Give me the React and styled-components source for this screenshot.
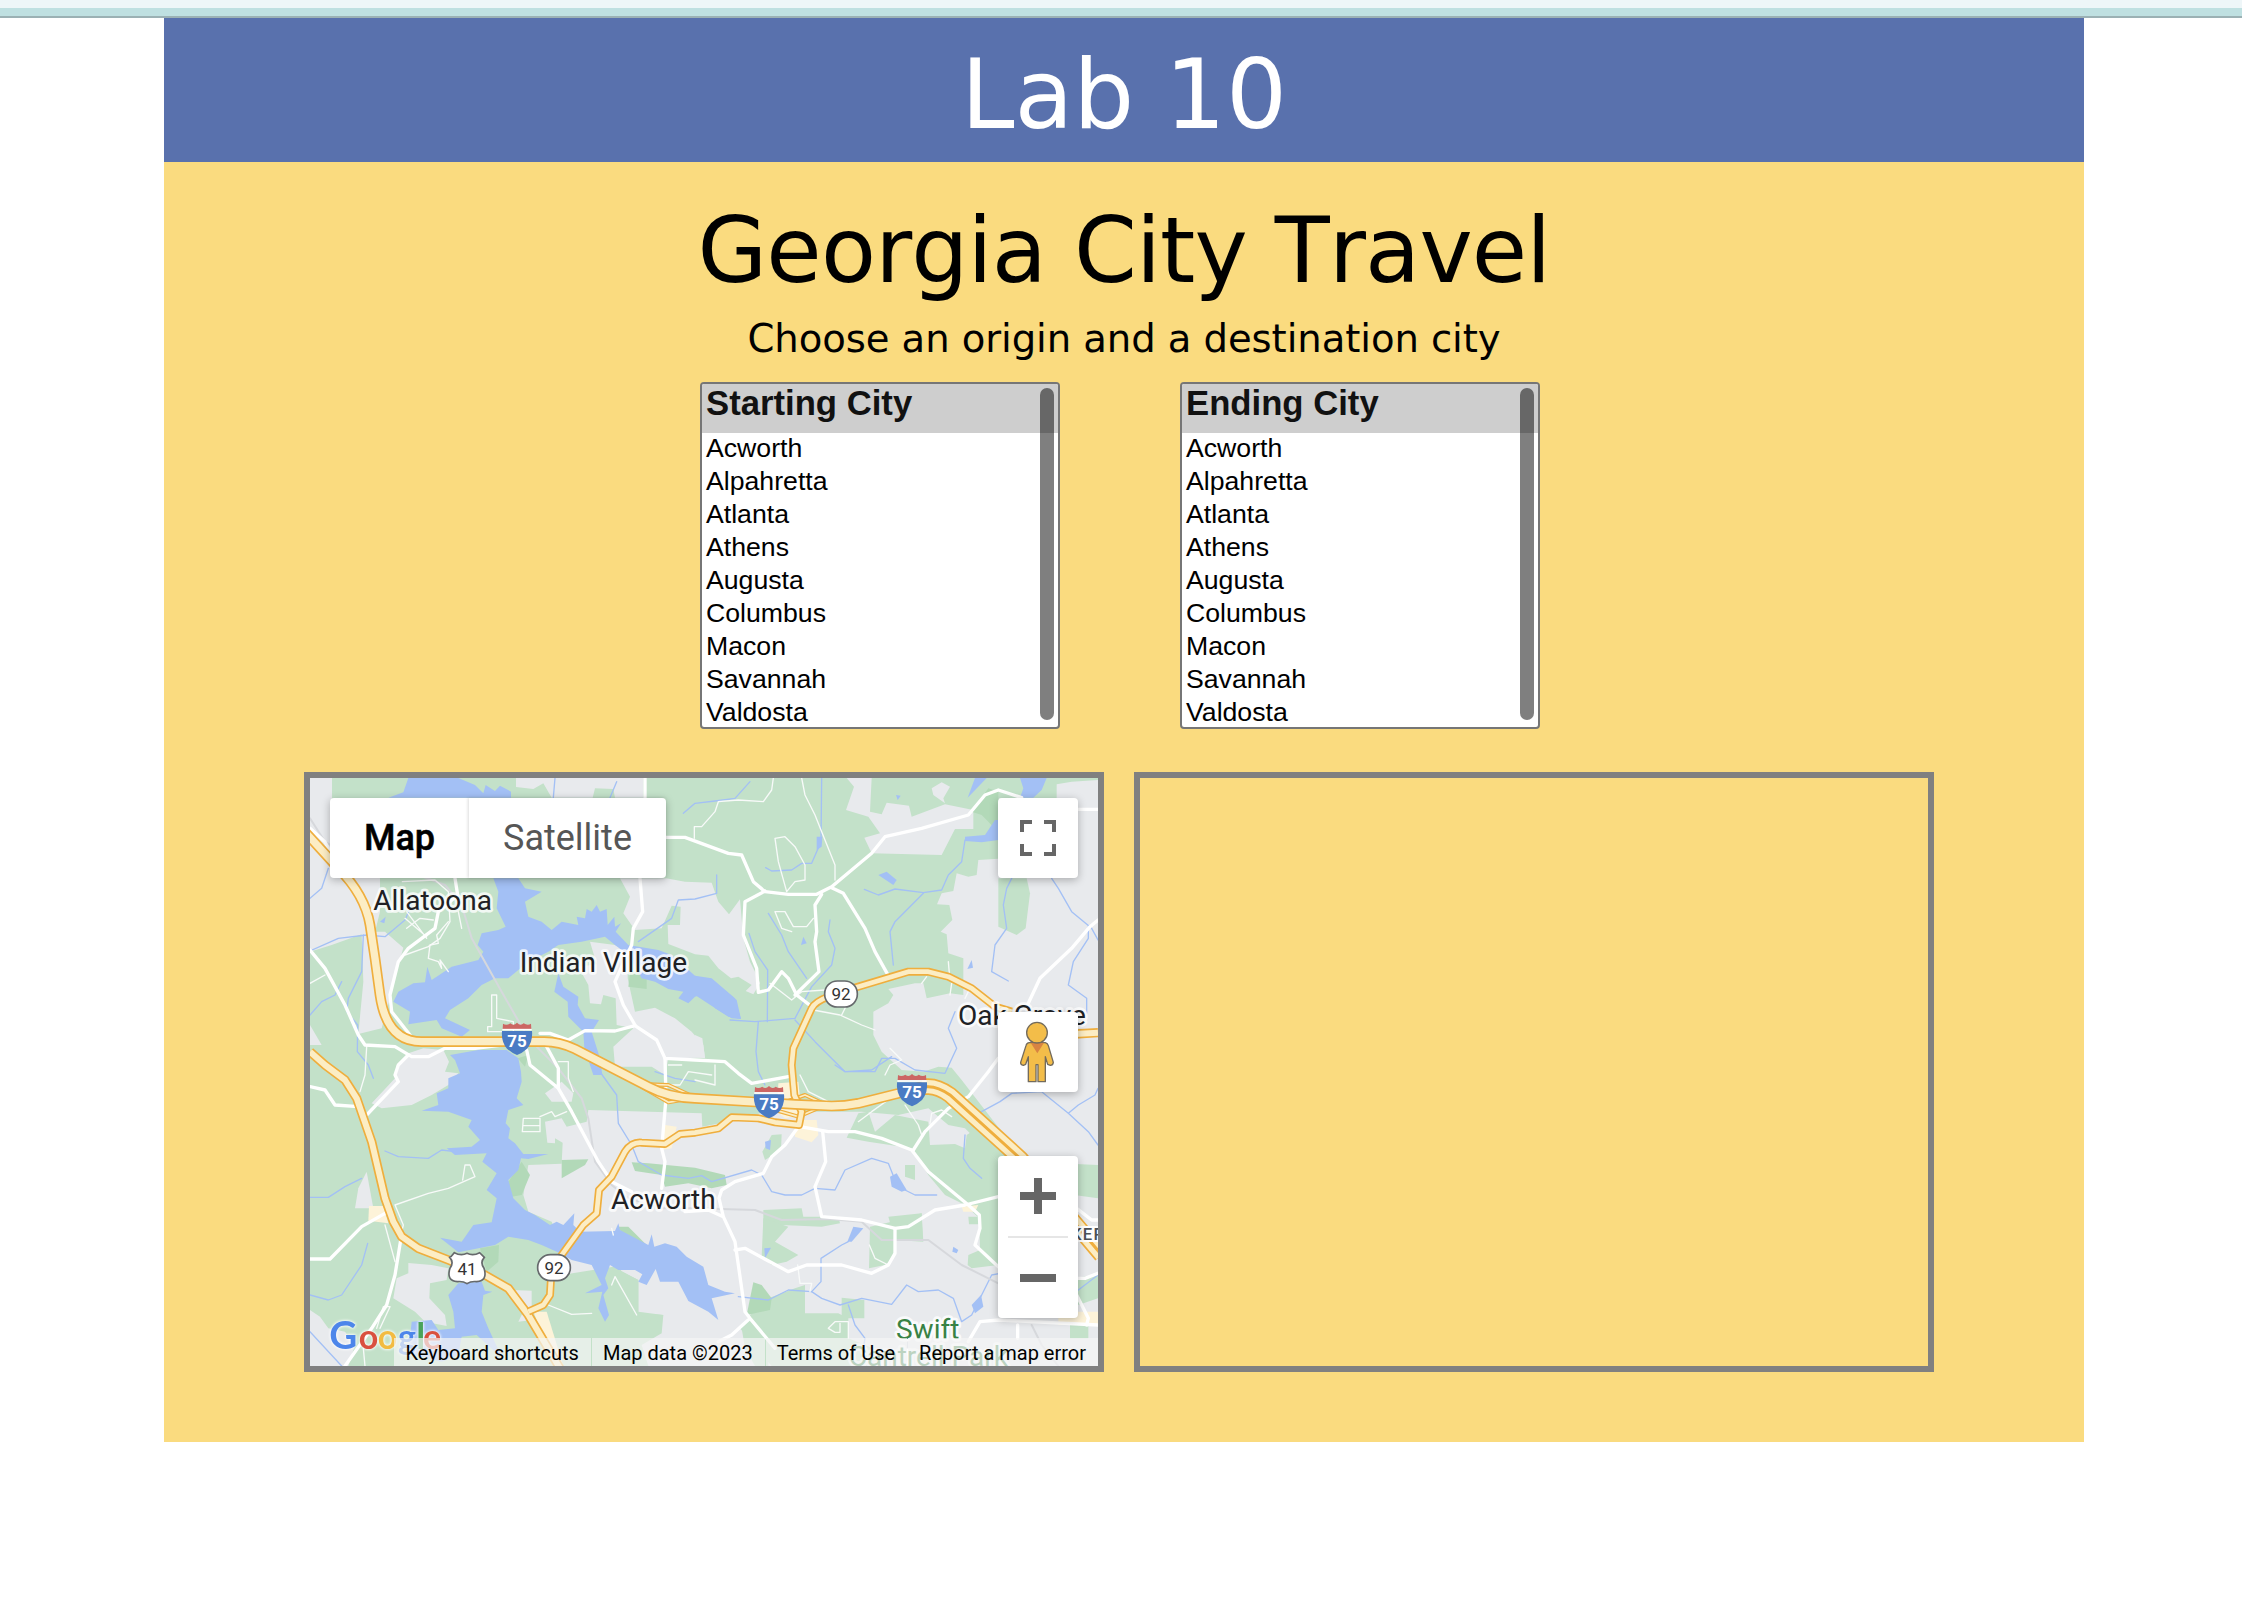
import React from "react";
import styled, { createGlobalStyle } from "styled-components";

const GlobalStyle = createGlobalStyle`
  * { box-sizing: border-box; }
  body { margin: 0; background: #fff; font-family: Verdana, "DejaVu Sans", sans-serif; }
`;

const TopStrip = styled.div`
  height: 18px;
  background: #bfe0e1;
  border-top: 8px solid #eef6f8;
  border-bottom: 2px solid #9bb1b4;
`;
const Page = styled.div`
  width: 1920px;
  margin-left: 164px;
`;
const Header = styled.header`
  height: 144px;
  padding-top: 21px;
  background: #5971ad;
  color: #fff;
  text-align: center;
  font-size: 96px;
  line-height: 112px;
  font-kerning: none;
`;
const Main = styled.main`
  height: 1280px;
  padding-top: 35px;
  background: #fadb7f;
  color: #000;
`;
const Title = styled.h1`
  margin: 0;
  text-align: center;
  font-weight: 400;
  font-size: 90px;
  line-height: 108px;
  letter-spacing: -0.83px;
  font-kerning: none;
`;
const Subtitle = styled.p`
  margin: 0;
  text-align: center;
  font-size: 38.6px;
  line-height: 48px;
  letter-spacing: -0.08px;
  padding-top: 10px;
  font-kerning: none;
`;
const Pickers = styled.div`
  display: flex;
  gap: 120px;
  padding: 19px 0 0 536px;
`;
const ListBox = styled.div`
  position: relative;
  width: 360px;
  height: 347px;
  border: 2px solid #767676;
  border-radius: 4px;
  background: #fff;
  overflow: hidden;
  font-family: Arial, "Liberation Sans", sans-serif;
`;
const ListHead = styled.div`
  height: 49px;
  padding-left: 4px;
  background: #cecece;
  color: #111;
  font-weight: 700;
  font-size: 34.7px;
  line-height: 38px;
`;
const Options = styled.ul`
  display: flex;
  flex-direction: column;
  gap: 3px;
  margin: 0;
  padding: 0 0 0 4px;
  list-style: none;
`;
const Option = styled.li`
  font-size: 26.67px;
  line-height: 30px;
`;
const Thumb = styled.div`
  position: absolute;
  top: 4px;
  right: 4px;
  width: 14px;
  height: 332px;
  border-radius: 7px;
  background: rgba(0, 0, 0, 0.5);
`;
const Panels = styled.div`
  display: flex;
  gap: 30px;
  padding: 43px 0 0 140px;
`;
const Panel = styled.section`
  position: relative;
  width: 800px;
  height: 600px;
  border: 6px solid #808080;
  overflow: hidden;
  font-family: Roboto, Arial, sans-serif;
`;
const MapArt = styled.svg`
  display: block;
  width: 788px;
  height: 588px;
`;
const TypeSwitch = styled.div`
  position: absolute;
  top: 20px;
  left: 20px;
  display: flex;
  height: 80px;
  border-radius: 4px;
  background: #fff;
  box-shadow: 0 2px 8px rgba(0, 0, 0, 0.28);
`;
const TypeButton = styled.div`
  width: ${(p) => p.$width}px;
  text-align: center;
  font-size: 36px;
  line-height: 80px;
  font-weight: ${(p) => (p.$active ? 500 : 400)};
  color: ${(p) => (p.$active ? "#000" : "#565656")};
  -webkit-text-stroke: ${(p) => (p.$active ? "0.5px #000" : "0")};
  box-shadow: ${(p) => (p.$active ? "none" : "-1px 0 3px rgba(0,0,0,.14)")};
`;
const Control = styled.div`
  position: absolute;
  right: 20px;
  top: ${(p) => p.$top}px;
  width: 80px;
  height: ${(p) => p.$height || 80}px;
  border-radius: 4px;
  background: #fff;
  box-shadow: 0 2px 8px rgba(0, 0, 0, 0.28);
`;
const ControlIcon = styled.svg`
  display: block;
  width: 80px;
  height: 80px;
`;
const Divider = styled.div`
  width: 60px;
  height: 2px;
  margin: 0 10px;
  background: #e6e6e6;
`;
const Attribution = styled.footer`
  position: absolute;
  right: 0;
  bottom: 0;
  display: flex;
  height: 28px;
  font-size: 20px;
  line-height: 30px;
  color: #000;
  white-space: nowrap;
`;
const Credit = styled.span`
  padding: 0 12px 0 11px;
  margin-left: 1px;
  background: rgba(245, 245, 245, 0.7);
`;

const CITIES = ["Acworth", "Alpahretta", "Atlanta", "Athens", "Augusta", "Columbus", "Macon", "Savannah", "Valdosta"];

const LAND = [
  "M45 39H111V100L180 280L255 340V440L240 500L270 500L325 548L300 640L285 700L260 790L190 807L205 650L200 508L110 540L45 560Z",
  "M663 39H1045V98H960L955 72L900 70L893 98H770L745 55L715 72L663 66Z",
  "M975 340H1113L1170 350L1250 353L1270 410L1302 448L1335 403L1345 520L1365 590L1385 630L1395 655L1375 688L1352 678L1370 660L1330 635L1308 640L1270 610L1240 572L1200 568L1120 537L1118 480L1155 480L1157 425L1130 422L1100 490L1020 495L985 445L1005 395Z",
  "M885 530L960 540L1000 560L998 640L1020 740L1080 728L1140 760L1190 800L1225 840L1230 878L1120 880L1110 930L1070 905L960 905L955 845L1015 790L965 780L962 700L925 690L918 718L885 715L880 660L850 605L905 598Z",
  "M340 865L385 850L445 855L462 890L450 920L490 925L460 960L410 990L350 1020L260 1030L230 1015L300 940L305 900Z",
  "M215 1220L235 1330L180 1330L190 1270Z",
  "M340 1494L410 1500L460 1510L455 1545L405 1555L403 1600L450 1650L455 1683L390 1670L360 1640L295 1600L305 1540L340 1525Z",
  "M45 1635L75 1655L100 1690L150 1700L180 1740L160 1803H45Z",
  "M45 780L80 840L45 840Z",
  "M750 985L800 950L835 985L830 1010L770 1010Z",
  "M750 1070L800 1060L815 1085L875 1070L880 1035L1220 1045L1222 1085L1350 1060L1410 1040H1560L1700 1040L1810 1050L1900 1030L1960 1080L2010 1090L2090 1170L2190 1270L2409 1300V1803H1060L1040 1740L1100 1705L1105 1650L1030 1645L1030 1545L955 1505L800 1530L800 1450L770 1370L700 1340L685 1290L700 1200L800 1196L803 1133L780 1120L780 1135L757 1133Z",
  "M670 1670L710 1665V1577L650 1575L690 1630Z",
  "M1655 39H1730L1725 140L1760 148L1775 113L1842 122L1850 155L1950 118L2035 135V192H1980L1940 270L1730 265L1708 218L1755 205L1720 155L1653 135L1677 65Z",
  "M1910 70L1940 52L1965 65L1945 100L1950 115L1915 90Z",
  "M2285 58L2330 50L2409 45V300H2300L2110 100H2285Z",
  "M2050 285L2110 281L2409 280V1200L2190 1190L2000 945L1970 908L1930 905L1885 920L1820 915L1760 860L1735 810V740L1780 715L1795 690L1780 672L1860 655L1885 655L1895 700L1965 685L2005 690L2005 580L1960 565L1955 508L1937 500L1972 465L1963 420L1926 418L1940 385L1975 378L1985 325L2020 335L2045 330Z",
  "M1200 810L1222 820L1230 880L1200 875Z",
];

const GREEN = [
  "M2110 340H2195L2205 385L2192 490L2165 510L2110 485Z",
  "M1430 1110L1460 1108L1458 1155L1410 1185L1402 1160Z",
  "M1690 1045L1720 1040L1740 1100L1800 1050L1900 1070L1905 1140L1980 1137L2010 1150L2015 1110L2030 1100L2110 1190V1500L2030 1510L2018 1500L2020 1470L2055 1455L2053 1360L2010 1320L1950 1290L1900 1230L1850 1150L1720 1130L1655 1118Z",
  "M1830 1200H1860V1245L1830 1235Z",
  "M1405 1335L1520 1330L1525 1355L1630 1355L1635 1375L1580 1385L1460 1380L1405 1480Z",
  "M1405 1360L1480 1385L1440 1430L1510 1470L1475 1490L1430 1500L1400 1475Z",
  "M1725 1385L1790 1370L1880 1345L1885 1430L1800 1425L1795 1480L1770 1500L1722 1510Z",
  "M1780 1355L1880 1345L1883 1425L1800 1425Z",
  "M1365 1650L1420 1600L1500 1570L1530 1560V1645H1630L1640 1650V1598L1708 1605V1660H1660V1720L1760 1760L1730 1803H1430L1335 1690Z",
  "M2020 1355H2055V1378H2022Z",
  "M2409 1530V1600L2350 1620L2330 1540Z",
  "M2325 1680H2380V1720H2325Z",
  "M950 1505L975 1510L980 1520L1030 1545V1640L1105 1650L1060 1700L1040 1680L1070 1665L1020 1645L950 1635Z",
  "M795 1610L890 1605L895 1640L830 1705L795 1690Z",
  "M830 1700H930V1803H820Z",
  "M1340 1690L1375 1660L1420 1700V1803H1380L1350 1750Z",
];
const DARK_GREEN = [
  "M640 1250L680 1190L705 1230L680 1290L650 1295Z",
  "M800 1185L880 1183L870 1200L800 1240Z",
  "M1010 1192L1060 1195L1200 1208L1290 1230L1295 1260L1250 1270L1180 1255L1110 1265L1100 1230L1020 1218Z",
  "M965 1385L1000 1385L1055 1440L1020 1445Z",
  "M1375 1552L1400 1560L1430 1600L1425 1635L1355 1650Z",
  "M555 1450L612 1440L610 1490L575 1520Z",
  "M1005 625H1055V672L1000 665Z",
  "M2030 140L2080 70L2110 80V200L2060 150Z",
  "M668 880L700 870L690 905Z",
];
const CREAM = [
  "M222 1323H265L280 1375L220 1367Z",
  "M1110 1080L1145 1085L1130 1150L1100 1155Z",
  "M1450 955L1510 950L1520 1050L1470 1060L1445 1040Z",
  "M1500 1065L1565 1065L1570 1110L1550 1132L1500 1115Z",
  "M2000 1325L2050 1320L2040 1340L2005 1340Z",
  "M715 1640H755L805 1803H780Z",
  "M2290 1640H2409V1680H2290Z",
];
const WATER = [
  "M340 39H490L540 60L565 85L572 60L600 78L615 62L648 80V98H280L325 82Z",
  "M595 340H670L690 370L740 380L690 410L700 455L740 470L770 495L800 470L850 480L845 455L870 460L875 432L890 440L905 420L915 440L935 432L938 480L958 455L960 485L978 475L962 500L1000 540L1090 555L1130 570L1200 632L1250 640L1320 700L1338 762L1310 760L1260 730L1235 685L1200 695L1180 715L1150 700L1165 680L1120 672L1080 650L1040 640L1000 570L960 540L930 515L860 530L790 540L760 560L700 590L640 640L600 640L560 660L520 700L465 735L450 760L525 795L500 815L440 790L425 765L340 778L345 740L295 710L310 680L355 655L390 652L397 605L410 645L470 605L550 585L565 560L548 540L560 505L610 495L632 485L605 430L610 380Z",
  "M790 625L805 665L850 695L848 720L870 760L912 765L890 800L915 880L922 930H895L868 850L865 800L820 755L818 710L778 680Z",
  "M465 870L550 855L635 855L670 880L678 920L680 950L665 1000L685 1020L640 1035L632 1075L645 1090L640 1120L660 1135L685 1167L760 1167L700 1182L678 1180L670 1215L640 1245L655 1300L690 1335L720 1350L765 1380L785 1370L805 1380L838 1345L835 1380L855 1400L960 1398L970 1375L975 1395L1060 1440L1070 1408L1078 1445L1110 1435L1145 1445L1175 1475L1225 1505L1240 1560L1290 1580L1320 1585L1250 1600L1270 1665L1240 1640L1180 1608L1150 1550L1095 1550L1082 1512L1055 1560L1030 1550L1042 1528L1020 1515L970 1515L945 1500L930 1540L940 1570L925 1590L942 1650L930 1670L910 1630L922 1580L870 1585L920 1560L890 1500L830 1485L795 1465L740 1440L700 1425L640 1415L600 1440L490 1462L435 1418L500 1430L535 1380L590 1372L605 1300L575 1275L605 1225L562 1190L575 1165L480 1170L455 1150L530 1145L555 1125L520 1085L530 1065L460 1040L380 1037L430 1020L425 985L460 970L460 940L495 925L480 885Z",
  "M490 1555L560 1550L570 1577L592 1580L565 1590L560 1640L580 1690L622 1780L545 1710L500 1715L490 1770L440 1790L340 1765L350 1670L410 1665L430 1695L480 1690L475 1640L460 1590Z",
  "M2175 39H2255L2240 75L2215 98H2175L2185 70Z",
  "M2018 98L2040 39H2075Z",
  "M1200 632L1255 650L1325 705L1338 762L1300 755L1200 690Z",
  "M1750 330L1775 320L1805 345L1795 360Z",
  "M1565 215H1582L1580 245L1565 255Z",
  "M2010 215L2070 210L2100 165H2110V225L2060 232L2010 228Z",
  "M1525 515L1535 535L1518 540Z",
  "M2030 585L2034 608L2017 612Z",
  "M1785 1235L1805 1225L1835 1275L1820 1280L1790 1265Z",
  "M1410 1130L1428 1125L1425 1155L1412 1150Z",
  "M1975 1445L1990 1455L1985 1465L1972 1460Z",
  "M2058 1590L2065 1625L2040 1645L2030 1620Z",
  "M1408 1450L1428 1448L1410 1480Z",
  "M1675 1385L1705 1390L1670 1430L1657 1430Z",
  "M1803 90L1817 92L1808 105Z",
  "M272 455L268 475L255 470Z",
];
const STREAMS = [
  "M45 558L130 520L215 510L270 515L330 465L350 420",
  "M45 400L80 370L100 310",
  "M205 510L200 620L160 700L155 740L188 780L187 860L220 900L235 940",
  "M45 750L80 710L120 690L140 650",
  "M945 98L965 50M780 39L775 98",
  "M1165 145L1200 115L1260 108L1320 100L1365 50",
  "M1580 39L1578 230L1550 295H1520L1490 315L1430 318L1412 308",
  "M2010 225L2000 290L1960 330L1940 375L1885 383L1800 372L1750 390L1708 373",
  "M1885 385L1800 470L1785 500L1795 600",
  "M1420 445L1460 510L1480 560L1535 640",
  "M1362 505L1380 560L1418 615L1417 770",
  "M1605 465L1600 500L1620 550L1610 600L1550 665L1500 760L1380 770L1305 765",
  "M1390 770L1383 860L1390 920L1410 960",
  "M1500 765L1560 830L1650 920H1740L1760 880L1800 880L1860 915L1950 925L1985 850L1960 790L1980 740",
  "M2150 340L2135 370L2125 420L2135 490L2100 540L2090 620L2140 648",
  "M2270 340L2290 370L2330 440L2390 490L2409 525M2380 485V520L2335 590L2320 660L2375 700V745",
  "M1030 530L1130 460L1150 405L1200 402L1265 385V330",
  "M900 900L965 990L970 1075L1010 1140L1030 1190L1100 1230L1180 1240L1220 1232L1250 1250L1370 1215L1400 1230L1430 1280L1470 1290H1520L1560 1270L1620 1275L1650 1215L1730 1180L1780 1195L1800 1245",
  "M1830 1275L1860 1290L1925 1290",
  "M270 1158L310 1175L400 1180L440 1155L480 1160",
  "M45 1297H100L150 1265L200 1240",
  "M45 1590L100 1605L140 1590L200 1500L218 1435",
  "M45 1700L140 1803",
  "M1330 1595L1420 1605L1480 1575L1550 1580L1580 1600L1635 1620L1700 1600L1790 1618L1835 1560L1870 1580L1930 1575L1975 1600L2000 1670L2030 1650L2090 1530L2115 1525",
  "M1550 1580L1578 1550V1480L1640 1440L1660 1430",
  "M1660 1620L1680 1680L1710 1720L1705 1750L1740 1803",
  "M2010 1110L2005 1180L2025 1210L2060 1240",
  "M2050 1045L2115 1010L2150 985L2240 980L2320 1045L2380 1100L2409 1140M2320 1045L2350 1020L2400 990L2409 970",
  "M2350 1575L2409 1530",
  "M1200 950L1140 940L1080 920",
  "M1620 900L1650 920L1730 915L1790 875",
];
const RAIL = [
  "M45 160L90 230L250 330L370 330L450 360L500 420L530 520L620 680L700 820L790 910L860 1000L880 1060L900 1190L950 1260L1000 1300L1100 1330L1200 1330L1380 1335L1460 1365L1600 1362L1700 1370L1760 1425L1900 1425L2000 1500L2110 1555",
  "M2210 1680L2240 1740L2290 1803",
];
const THIN_ROADS = [
  "M322 350L420 345L460 380L465 470L435 520L400 545L330 570M335 440L395 520M335 490L375 460L415 465M330 460L395 515",
  "M460 470L425 510L430 535L405 540L400 580L430 590L440 610L435 585L460 620M490 440L500 490",
  "M590 690H605V760L655 770V800H578V785H590Z",
  "M45 655L90 630M215 845L210 930L195 980",
  "M300 1320L400 1285L460 1270L540 1235L525 1200H510L503 1245M300 1320L325 1380L315 1420M270 1380L300 1490",
  "M255 1690L285 1625H265L245 1690",
  "M685 1060H735V1100H682ZM735 1055L770 1040L780 1055L815 1040M685 1082H735",
  "M1520 39L1530 90L1560 150L1580 200L1620 300V345M1435 39L1430 75L1405 110L1330 105L1270 110L1260 140L1220 185H1198V220",
  "M1440 220L1450 290L1475 380L1500 350L1530 345L1530 300L1500 245L1470 215Z",
  "M1440 440H1470L1495 485H1535L1555 460M1440 440L1460 490L1490 500",
  "M1425 655L1490 705L1520 680L1590 675M1555 735L1635 750L1700 780L1740 795M1640 750L1655 720",
  "M1785 850L1820 885L1785 900L1770 930",
  "M960 1535L1025 1650M960 1535L950 1560M760 1620L830 1648L890 1645",
  "M1723 1440L1740 1480L1780 1500M1508 1500L1515 1555H1550L1545 1580",
  "M1600 1690L1620 1670H1660V1720M1600 1690L1620 1702H1635V1675",
  "M1690 1070L1730 1040L1800 990M1830 1020L1870 1080L1880 1110M1905 1075L1910 1045L1940 1035L1970 1055",
  "M1120 900H1160M1115 960H1155L1180 920L1250 930M1200 945L1260 960V900M1515 930L1540 980L1600 1010M790 890H820L820 940L835 980",
  "M1960 590L1963 625M1970 655L1965 690M2020 680L2010 700M1895 635L1880 655",
  "M950 1390L955 1410M205 1750L210 1803",
];
const ROADS = [
  "M45 555L90 610L150 720L190 810L210 840L300 845L350 875L400 875L450 850L540 850L620 840",
  "M300 930L310 900L340 870M300 930L310 950L215 1050",
  "M45 965L90 975L120 1020L190 1025",
  "M480 340L488 390L430 440L420 490L340 550L310 590L285 690L290 740L345 810",
  "M45 190L90 230L110 270",
  "M1050 39V98M1035 340L1043 440L1015 490L1010 540L960 650L985 720L1020 780",
  "M1113 217H1170L1300 265L1340 270L1375 350L1410 380L1480 388L1565 388L1610 365L1730 265L1770 215L1880 190L2020 150L2070 90L2110 75L2180 98",
  "M1410 378L1350 410L1345 510L1385 610L1390 682L1420 675L1460 620L1480 640L1505 690L1550 725",
  "M1580 388L1560 420L1565 500L1560 530L1572 620L1500 690",
  "M1610 368L1645 385L1710 490L1740 560L1778 628",
  "M2345 133H2409M2409 465L2385 485L2330 550L2235 640L2195 725",
  "M2110 880L2080 920L2020 995L1960 1030L1890 1100L1855 1155",
  "M735 805L765 805L820 825L870 797L960 798L1020 782L1085 825L1110 880L1200 885L1290 890L1330 925L1370 955L1480 935",
  "M695 855L705 900L790 970L830 1040L910 1190L950 1250L1010 1280M755 845L790 910V970",
  "M1110 880L1113 1000L1100 1150L1110 1190L1100 1270",
  "M1515 1085L1600 1100H1680L1760 1120L1850 1155L1900 1220L2020 1320L2053 1350L2055 1390L2040 1440L2110 1505",
  "M1510 1085L1470 1140L1430 1175L1405 1225L1320 1250L1280 1275L1272 1300L1285 1355L1240 1335L1170 1340M1285 1355L1320 1430L1350 1640L1365 1660L1440 1750M1365 1660L1310 1710L1270 1730",
  "M1583 1100L1592 1190L1560 1265L1580 1355L1700 1365L1800 1390L1840 1385L1920 1335L2010 1320L2110 1295",
  "M1320 1455L1350 1450L1480 1520L1535 1500H1640L1730 1525L1780 1500L1800 1465V1390",
  "M2020 1730L2055 1670L2110 1665L2409 1680M2168 1680V1720",
  "M2345 1330L2390 1365H2409M2345 1590L2380 1660L2375 1680M2345 1540L2370 1540L2409 1525",
  "M45 1482H105L200 1385L270 1345M318 1420L300 1530L275 1620L230 1690L150 1803",
];
const US41 = "M45 860L90 900L150 945L185 1000L230 1130L270 1300L295 1370L320 1415L370 1450L460 1485L570 1530L640 1570L700 1650L795 1810";
const SR92 = "M700 1640L745 1620L765 1590L768 1540L800 1470L865 1380L905 1345L912 1275L950 1235L990 1160Q1010 1130 1040 1133L1110 1137L1155 1107L1200 1103L1270 1090L1310 1057L1390 1060L1440 1072L1512 1080L1520 1040L1498 990L1490 900L1495 850L1550 730Q1560 710 1600 695L1680 668L1840 620H1900L1960 635L2030 670L2100 725L2150 740";
const I75 = "M20 190L130 310Q210 390 225 480L240 580L255 690Q275 830 380 830L620 830H740Q790 828 840 852L1060 965Q1120 997 1200 1000L1500 1018L1610 1023Q1650 1023 1690 1015L1810 985L1880 965";
const I75_SOUTH = "M1880 965H1900Q1930 965 1965 990L2175 1180L2420 1470";
const RAMPS = "M1040 965L1120 1012L1190 1000M1060 958L1120 960L1180 988M1400 995L1440 1035L1510 1055L1580 1025M1480 1008L1530 990L1590 1018";

function Shape({ list, fill }) {
  return list.map((d) => <path key={d} d={d} fill={fill} />);
}
function Line({ list, color, width }) {
  return list.map((d) => (
    <path key={d} d={d} fill="none" stroke={color} strokeWidth={width} strokeLinejoin="round" strokeLinecap="round" />
  ));
}
function Highway({ d, width }) {
  return (
    <g fill="none" strokeLinejoin="round">
      <path d={d} stroke="#efae3d" strokeWidth={width} />
      <path d={d} stroke="#fcedc4" strokeWidth={width - 10} />
    </g>
  );
}
function Interstate({ x, y }) {
  return (
    <g transform={`translate(${x} ${y})`}>
      <path d="M-45-24H45Q48 8 30 29Q16 42 0 48Q-16 42-30 29Q-48 8-45-24Z" fill="#4a7bc4" />
      <path d="M-43-30L-42-46Q-32-39-20-47Q-10-38 0-49Q10-38 20-47Q32-39 42-46L43-30Z" fill="#cc6663" />
      <path d="M-44-28H44" stroke="#fff" strokeWidth="5" />
      <text y="23" textAnchor="middle" fontSize="51" fontWeight="700" fill="#fff">75</text>
    </g>
  );
}
function StateRoute({ x, y }) {
  return (
    <g transform={`translate(${x} ${y})`}>
      <rect x="-49" y="-39" width="98" height="78" rx="38" fill="#fff" stroke="#66696c" strokeWidth="5" />
      <text y="19" textAnchor="middle" fontSize="51" fill="#333">92</text>
    </g>
  );
}
const PlaceLabel = styled.text`
  font-size: 84px;
  fill: ${(p) => p.$color || "#202124"};
  stroke: rgba(255, 255, 255, 0.8);
  stroke-width: 16px;
  stroke-linejoin: round;
  paint-order: stroke;
`;
const LogoText = styled.text`
  font-family: Lato, sans-serif;
  font-weight: 700;
  filter: drop-shadow(0 0 4px rgba(255, 255, 255, 0.9)) drop-shadow(0 0 3px rgba(255, 255, 255, 0.7));
`;

function RoadMap() {
  return (
    <MapArt viewBox="45 39 2364 1764" fontFamily="Roboto, sans-serif">
      <rect x="45" y="39" width="2364" height="1764" fill="#c3e1c9" />
      <Shape list={LAND} fill="#e8eaed" />
      <Shape list={GREEN} fill="#c3e1c9" />
      <Shape list={DARK_GREEN} fill="#b2d9b8" />
      <Shape list={CREAM} fill="#fdf3d9" />
      <Line list={STREAMS} color="#a3c0f5" width={4} />
      <Shape list={WATER} fill="#a3c0f5" />
      <Line list={RAIL} color="#d6d8dc" width={6} />
      <Line list={THIN_ROADS} color="#f8faf9" width={4} />
      <Line list={ROADS} color="#fff" width={10} />
      <Line list={[RAMPS]} color="#efae3d" width={12} />
      <Line list={[RAMPS]} color="#fcedc4" width={5} />
      <Highway d={US41} width={28} />
      <Highway d={SR92} width={24} />
      <Highway d="M2340 807L2409 803" width={28} />
      <Highway d={I75} width={32} />
      <Highway d={I75_SOUTH} width={50} />
      <path d={I75_SOUTH} fill="none" stroke="#efae3d" strokeWidth="9" />
      <Interstate x={666} y={822} />
      <Interstate x={1422} y={1012} />
      <Interstate x={1851} y={976} />
      <StateRoute x={1638} y={687} />
      <StateRoute x={777} y={1508} />
      <g transform="translate(516 1508)">
        <path d="M-47-34L-38-45Q-18-34 0-43Q18-34 38-45L52-31Q38-16 51 2Q63 39 29 42Q12 40 0 48Q-12 40-29 42Q-63 39-51 2Q-38-16-52-31Z" fill="#fff" stroke="#66696c" strokeWidth="5" />
        <text y="22" textAnchor="middle" fontSize="51" fill="#333">41</text>
      </g>
      <PlaceLabel x="235" y="434">Allatoona</PlaceLabel>
      <PlaceLabel x="674" y="621">Indian Village</PlaceLabel>
      <PlaceLabel x="948" y="1331">Acworth</PlaceLabel>
      <PlaceLabel x="1989" y="780">Oak Grove</PlaceLabel>
      <PlaceLabel x="1898" y="1723" textAnchor="middle" $color="#388245">Swift</PlaceLabel>
      <PlaceLabel x="1900" y="1802" textAnchor="middle" $color="#388245">Cantrell Park</PlaceLabel>
      <text x="2328" y="1425" fontSize="50" fontWeight="500" letterSpacing="4" fill="#4b5157" stroke="#fff" strokeWidth="12" paintOrder="stroke">KER</text>
      <LogoText y="1753">
        <tspan x="103" fontSize="116" fill="#4d86ea">G</tspan>
        <tspan x="191" fontSize="102" fill="#d9503f">o</tspan>
        <tspan x="248" fontSize="102" fill="#f2bb41">o</tspan>
        <tspan x="309" fontSize="102" fill="#4d86ea">g</tspan>
        <tspan x="364" fontSize="108" fill="#4aa35a">l</tspan>
        <tspan x="384" fontSize="102" fill="#d9503f">e</tspan>
      </LogoText>
    </MapArt>
  );
}

function CityList({ heading }) {
  return (
    <ListBox>
      <ListHead>{heading}</ListHead>
      <Options>
        {CITIES.map((c) => <Option key={c}>{c}</Option>)}
      </Options>
      <Thumb />
    </ListBox>
  );
}

export default function App() {
  return (
    <>
      <GlobalStyle />
      <TopStrip />
      <Page>
        <Header>Lab 10</Header>
        <Main>
          <Title>Georgia City Travel</Title>
          <Subtitle>Choose an origin and a destination city</Subtitle>
          <Pickers>
            <CityList heading="Starting City" />
            <CityList heading="Ending City" />
          </Pickers>
          <Panels>
            <Panel>
              <RoadMap />
              <TypeSwitch>
                <TypeButton $width={139} $active>Map</TypeButton>
                <TypeButton $width={197}>Satellite</TypeButton>
              </TypeSwitch>
              <Control $top={20}>
                <ControlIcon viewBox="0 0 80 80">
                  <path d="M24 34V24H34M46 24H56V34M56 46V56H46M34 56H24V46" fill="none" stroke="#666" strokeWidth="4" />
                </ControlIcon>
              </Control>
              <Control $top={234}>
                <ControlIcon viewBox="0 0 240 240">
                  <path d="M94 92H142Q149 94 151 101L166 151Q165 160 157 160L149 157L142 134V209H120V158H114V209H91V134L83 157L76 160Q67 158 68 151L84 101Q86 93 94 92Z" fill="#f3bd49" stroke="#736b5c" strokeWidth="4" strokeLinejoin="round" />
                  <path d="M98 92H138L118 124Z" fill="#d88442" />
                  <circle cx="117" cy="62" r="31" fill="#f3bd49" stroke="#736b5c" strokeWidth="4" />
                </ControlIcon>
              </Control>
              <Control $top={378} $height={162}>
                <ControlIcon viewBox="0 0 80 80">
                  <path d="M22 40H58M40 22V58" stroke="#666" strokeWidth="8" />
                </ControlIcon>
                <Divider />
                <ControlIcon viewBox="0 0 80 80">
                  <path d="M22 40H58" stroke="#666" strokeWidth="8" />
                </ControlIcon>
              </Control>
              <Attribution>
                <Credit>Keyboard shortcuts</Credit>
                <Credit>Map data ©2023</Credit>
                <Credit>Terms of Use</Credit>
                <Credit>Report a map error</Credit>
              </Attribution>
            </Panel>
            <Panel />
          </Panels>
        </Main>
      </Page>
    </>
  );
}
